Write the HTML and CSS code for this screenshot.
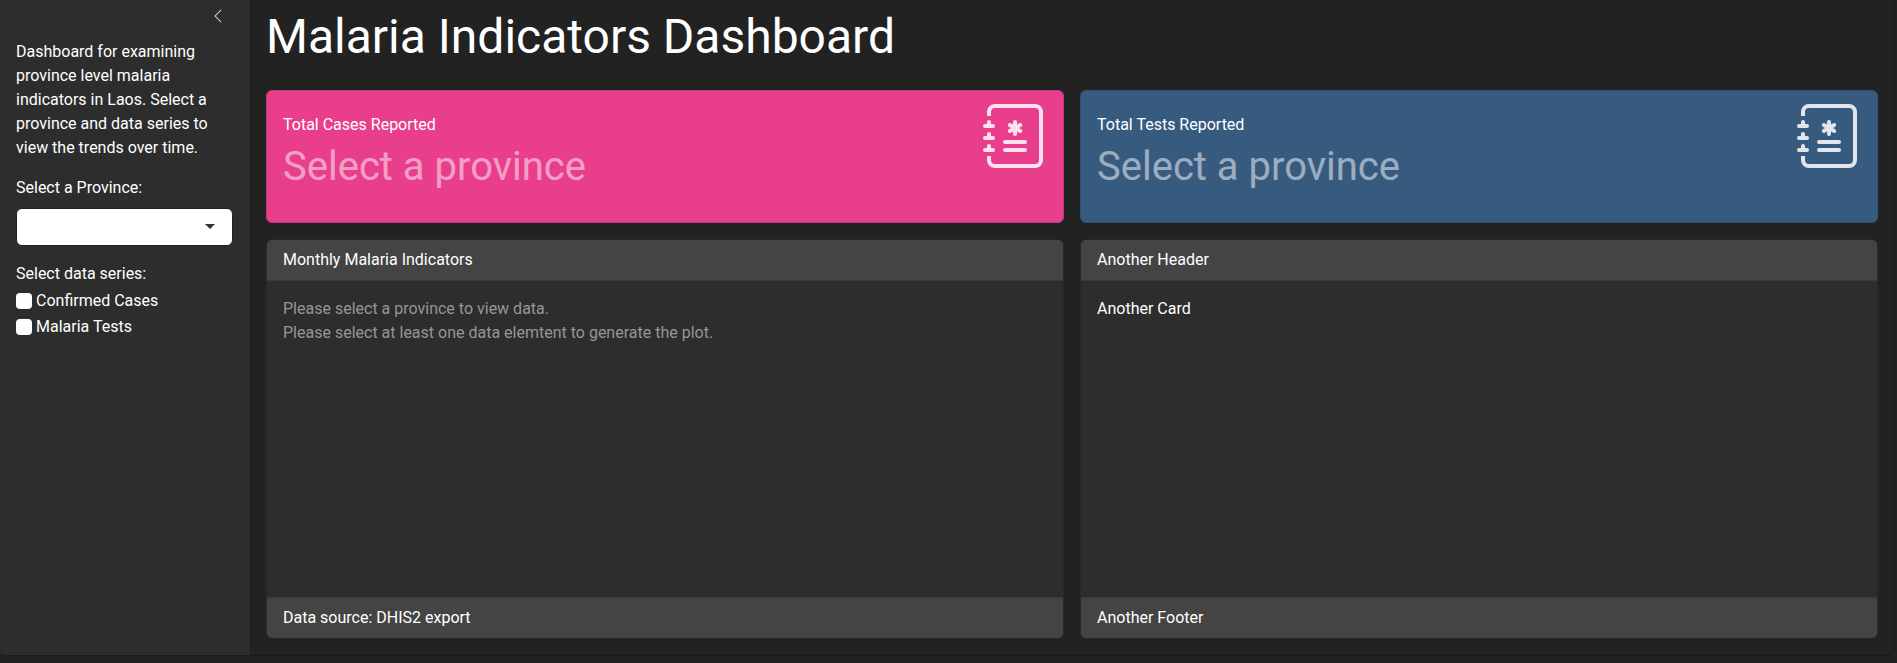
FILE: index.html
```
<!DOCTYPE html>
<html lang="en">
<head>
<meta charset="utf-8">
<title>Malaria Indicators Dashboard</title>
<link rel="stylesheet" href="styles.css">
</head>
<body>
<svg class="defs" aria-hidden="true">
  <symbol id="journal" viewBox="0 0 16 16">
    <path fill-rule="evenodd" d="M8 4a.5.5 0 0 1 .5.5v.634l.549-.317a.5.5 0 1 1 .5.866L9 6l.549.317a.5.5 0 1 1-.5.866L8.5 6.866V7.5a.5.5 0 0 1-1 0v-.634l-.549.317a.5.5 0 1 1-.5-.866L7 6l-.549-.317a.5.5 0 0 1 .5-.866l.549.317V4.5A.5.5 0 0 1 8 4zM5 9.5a.5.5 0 0 1 .5-.5h5a.5.5 0 0 1 0 1h-5a.5.5 0 0 1-.5-.5zm0 2a.5.5 0 0 1 .5-.5h5a.5.5 0 0 1 0 1h-5a.5.5 0 0 1-.5-.5z"/>
    <path d="M3 0h10a2 2 0 0 1 2 2v12a2 2 0 0 1-2 2H3a2 2 0 0 1-2-2v-1h1v1a1 1 0 0 0 1 1h10a1 1 0 0 0 1-1V2a1 1 0 0 0-1-1H3a1 1 0 0 0-1 1v1H1V2a2 2 0 0 1 2-2z"/>
    <path d="M1 5v-.5a.5.5 0 0 1 1 0V5h.5a.5.5 0 0 1 0 1h-2a.5.5 0 0 1 0-1H1zm0 3v-.5a.5.5 0 0 1 1 0V8h.5a.5.5 0 0 1 0 1h-2a.5.5 0 0 1 0-1H1zm0 3v-.5a.5.5 0 0 1 1 0v.5h.5a.5.5 0 0 1 0 1h-2a.5.5 0 0 1 0-1H1z"/>
  </symbol>
</svg>
<div class="layout">
  <aside class="sidebar">
    <button class="collapse" aria-label="Toggle sidebar">
      <svg viewBox="0 0 16 16" width="16" height="16" fill="currentColor"><path fill-rule="evenodd" d="M11.354 1.646a.5.5 0 0 1 0 .708L5.707 8l5.647 5.646a.5.5 0 0 1-.708.708l-6-6a.5.5 0 0 1 0-.708l6-6a.5.5 0 0 1 .708 0z"/></svg>
    </button>
    <p class="intro">Dashboard for examining province level malaria indicators in Laos. Select a province and data series to view the trends over time.</p>
    <div class="field">
      <div class="label">Select a Province:</div>
      <div class="select"><span class="caret"></span></div>
    </div>
    <div class="field">
      <div class="label-tight">Select data series:</div>
      <label class="check"><input type="checkbox"><span>Confirmed Cases</span></label>
      <label class="check"><input type="checkbox"><span>Malaria Tests</span></label>
    </div>
  </aside>
  <main class="main">
    <h1 class="title">Malaria Indicators Dashboard</h1>
    <div class="boxes">
      <section class="value-box pink">
        <div class="value-text">
          <p class="value-title">Total Cases Reported</p>
          <p class="value">Select a province</p>
        </div>
        <svg class="showcase"><use href="#journal"/></svg>
      </section>
      <section class="value-box blue">
        <div class="value-text">
          <p class="value-title">Total Tests Reported</p>
          <p class="value">Select a province</p>
        </div>
        <svg class="showcase"><use href="#journal"/></svg>
      </section>
    </div>
    <div class="cards">
      <section class="card">
        <header class="card-header">Monthly Malaria Indicators</header>
        <div class="card-body muted">Please select a province to view data.<br>Please select at least one data elemtent to generate the plot.</div>
        <footer class="card-footer">Data source: DHIS2 export</footer>
      </section>
      <section class="card">
        <header class="card-header">Another Header</header>
        <div class="card-body">Another Card</div>
        <footer class="card-footer">Another Footer</footer>
      </section>
    </div>
  </main>
</div>
</body>
</html>
```
FILE: styles.css
```
* { box-sizing: border-box; }
body {
  margin: 0;
  height: 663px;
  overflow: hidden;
  background: #222;
  color: #fff;
  font: 16px/24px Roboto, "Liberation Sans", sans-serif;
}
p, h1 { margin: 0; font-weight: 400; }
.defs { display: none; }
.layout {
  display: grid;
  grid-template-columns: 250px minmax(0, 1fr);
  width: 1895px;
  height: 656px;
  border-right: 1px solid #1b1b1b;
  border-bottom: 1px solid #1b1b1b;
  border-radius: 0 0 6px 6px;
}
.sidebar {
  padding: 5px 16px 16px 16px;
  background: #2d2d2d;
  border-right: 1px solid #292929;
  border-bottom-left-radius: 5px;
}
.collapse {
  display: flex;
  margin: 3px 7px 16px auto;
  padding: 0;
  border: 0;
  background: none;
  color: #ddd;
}
.intro { margin-bottom: 16px; }
.field { margin-bottom: 16px; }
.label { margin-bottom: 8px; }
.label-tight { margin-bottom: 3px; }
.select {
  display: flex;
  align-items: center;
  justify-content: flex-end;
  height: 38px;
  padding-right: 17px;
  background: #fff;
  border: 1px solid #222;
  border-radius: 6px;
}
.caret {
  margin-bottom: 2px;
  border: 5px solid transparent;
  border-top-color: #303030;
  border-bottom: 0;
}
.check { display: flex; gap: 4px; height: 26px; }
.check input {
  appearance: none;
  width: 16px;
  height: 16px;
  margin: 4px 0 0;
  background: #fff;
  border-radius: 4px;
}
.main {
  display: flex;
  flex-direction: column;
  gap: 16px;
  padding: 8px 16px 16px;
}
.title { height: 66px; font-size: 48px; line-height: 57.6px; }
.boxes, .cards {
  display: grid;
  grid-template-columns: 1fr 1fr;
  gap: 16px;
}
.cards { flex: 1; }
.value-box {
  display: flex;
  justify-content: space-between;
  height: 133px;
  padding: 13px 16px;
  border: 1px solid;
  border-radius: 6px;
}
.pink { background: #e83e8c; border-color: #c23b77; }
.blue { background: #375a7f; border-color: #33506e; }
.value-text { padding-top: 9px; }
.value { margin-top: 6px; font-size: 40px; line-height: 48px; opacity: .5; }
.showcase { width: 64px; height: 64px; fill: rgba(255, 255, 255, .85); }
.card {
  display: flex;
  flex-direction: column;
  background: #2d2d2d;
  border: 1px solid #282828;
  border-radius: 6px;
  overflow: hidden;
}
.card-header, .card-footer { padding: 8px 16px; background: #444; }
.card-header { border-bottom: 1px solid #393939; }
.card-footer { border-top: 1px solid #393939; }
.card-body { flex: 1; padding: 16px; }
.muted { color: #969696; }
```
